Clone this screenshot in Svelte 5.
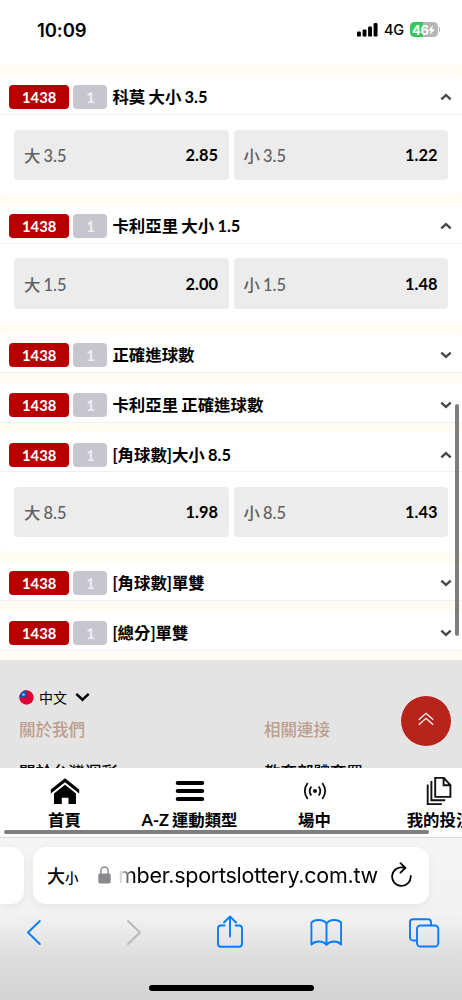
<script lang="ts">
	type Market = {
		title: string;
		odds?: { label: string; value: string }[];
	};

	let markets: Market[] = [
		{ title: "科莫 大小 3.5", odds: [{ label: "大 3.5", value: "2.85" }, { label: "小 3.5", value: "1.22" }] },
		{ title: "卡利亞里 大小 1.5", odds: [{ label: "大 1.5", value: "2.00" }, { label: "小 1.5", value: "1.48" }] },
		{ title: "正確進球數" },
		{ title: "卡利亞里 正確進球數" },
		{ title: "[角球數]大小 8.5", odds: [{ label: "大 8.5", value: "1.98" }, { label: "小 8.5", value: "1.43" }] },
		{ title: "[角球數]單雙" },
		{ title: "[總分]單雙" },
	];
</script>

<div class="phone">
	<header class="status">
		<span class="time">10:09</span>
		<div class="signals">
			<svg width="21" height="14" viewBox="0 0 21 14">
				<rect x="0" y="8.6" width="3.9" height="5" rx="1.2" />
				<rect x="5.6" y="6.6" width="3.9" height="7" rx="1.2" />
				<rect x="11.1" y="3.6" width="3.9" height="10" rx="1.2" />
				<rect x="16.6" y="0" width="3.9" height="13.6" rx="1.2" />
			</svg>
			<span class="network">4G</span>
			<div class="battery">
				<span>46</span>
				<svg width="7" height="10" viewBox="0 0 7 10"><path d="M5 0 0 5.7h2.8L1.8 10 7 4.2H4.1z" fill="#fff" /></svg>
			</div>
			<i class="tip"></i>
		</div>
	</header>

	<main>
		{#each markets as market}
			<section class="market">
				<div class="market-head">
					<span class="badge code">1438</span>
					<span class="badge count">1</span>
					<h3>{market.title}</h3>
					<svg class="chevron" class:open={market.odds} width="12" height="8" viewBox="0 0 12 8">
						<path d="M1.3 1.6 6 5.9l4.7-4.3" />
					</svg>
				</div>
				{#if market.odds}
					<div class="odds">
						{#each market.odds as odd}
							<button><span>{odd.label}</span><b>{odd.value}</b></button>
						{/each}
					</div>
				{/if}
			</section>
		{/each}
	</main>

	<footer>
		<div class="lang">
			<svg width="15" height="15" viewBox="0 0 15 15">
				<circle cx="7.5" cy="7.5" r="7.2" fill="#dc0030" />
				<path d="M7.5 7.5H.3A7.2 7.2 0 0 1 7.5.3z" fill="#1452a8" />
				<circle cx="4.5" cy="4.4" r="1.5" fill="#7fb0e4" />
			</svg>
			<span>中文</span>
			<svg width="15" height="10" viewBox="0 0 15 10"><path d="m1.3 1.8 6.2 5.9 6.2-5.9" fill="none" stroke="#000" stroke-width="2.5" /></svg>
		</div>
		<div class="columns">
			<div><h4>關於我們</h4><p>關於台灣運彩</p></div>
			<div><h4>相關連接</h4><p>教育部體育署</p></div>
		</div>
		<button class="top" aria-label="top">
			<svg width="16" height="14" viewBox="0 0 16 14"><path d="m.8 7.8 7.2-6.5 7.2 6.5M.8 12.8 8 6.3l7.2 6.500" fill="none" stroke="#fff" stroke-width="1.3" /></svg>
		</button>
	</footer>

	<nav class="menu">
		<div class="item">
			<svg width="30" height="28" viewBox="0 0 30 28">
				<path d="M.8 12.5 15 1.2l14.2 11.3v4L15 5.3.8 16.5z" />
				<path d="m4 16.5 11-8.8 11 8.8V27h-7.5v-6.2h-6.7V27H4z" />
			</svg>
			<span>首頁</span>
		</div>
		<div class="item">
			<svg width="30" height="28" viewBox="0 0 30 28"><path d="M2.700 6h24.600M2.700 14h24.600M2.700 22h24.600" stroke="#000" stroke-width="4" stroke-linecap="round" /></svg>
			<span>A-Z 運動類型</span>
		</div>
		<div class="item">
			<svg width="30" height="28" viewBox="0 0 30 28" fill="none" stroke="#111" stroke-width="1.8">
				<circle cx="15" cy="14" r="2.1" fill="#111" stroke="none" />
				<path d="M11.3 9.5q-3.2 4.5 0 9M18.7 9.5q3.2 4.5 0 9M7.7 6q-5.8 8 0 16M22.3 6q5.8 8 0 16" />
			</svg>
			<span>場中</span>
		</div>
		<div class="item">
			<svg width="30" height="28" viewBox="0 0 30 28" fill="none" stroke="#111" stroke-width="1.9">
				<path d="M10.2.9h8.6l6.6 7.2v11.8H10.2zM18.6 1v7.300h6.600M6.400 4v19.300h13.800M2.700 7.500v19.600h14.200" />
			</svg>
			<span>我的投注</span>
		</div>
		<i class="hscroll"></i>
	</nav>

	<div class="browser">
		<div class="tabs">
			<div class="prev-tab"></div>
			<div class="address">
				<span class="size">大<small>小</small></span>
				<svg width="13" height="18" viewBox="0 0 13 18">
					<rect x=".3" y="7.5" width="12.4" height="10" rx="1.7" fill="#8a898e" />
					<path d="M2.9 8V4.600a3.600 3.600 0 0 1 7.200 0V8" fill="none" stroke="#8a898e" stroke-width="1.5" />
				</svg>
				<span class="url">mber.sportslottery.com.tw</span>
				<svg width="22" height="26" viewBox="0 0 22 26" fill="none" stroke="#000" stroke-width="1.8" stroke-linecap="round" stroke-linejoin="round">
					<path d="M14 5.700A9.300 9.300 0 1 0 20.700 14M10.500 1.200l4.900 4.700-4.900 4.800" />
				</svg>
			</div>
			<div class="next-tab"></div>
		</div>
		<div class="tools">
			<svg width="32" height="36" viewBox="0 0 32 36"><path d="M22.8 7 11 18.500 22.800 30" /></svg>
			<svg class="off" width="32" height="36" viewBox="0 0 32 36"><path d="m13 7 12 11.500L13 30" /></svg>
			<svg width="32" height="36" viewBox="0 0 32 36"><path d="M11.500 11.500H8a3 3 0 0 0-3 3v15.200a3 3 0 0 0 3 3h18a3 3 0 0 0 3-3V14.500a3 3 0 0 0-3-3h-3.500M17 22.500V3M11 8.500l6-6 6 6" /></svg>
			<svg width="32" height="36" viewBox="0 0 32 36"><path d="M16.500 9.500C13 5 4.500 5 1.400 8.700v21.800c4-4 11.500-4 15.100.3 3.600-4.300 11.100-4.300 14.600-.3V8.700C28 5 20 5 16.500 9.500v21.300" /></svg>
			<svg width="32" height="36" viewBox="0 0 32 36"><rect x="9" y="11.500" width="21.300" height="21" rx="3.500" /><path d="M9 26.500H5a3 3 0 0 1-3-3V8.300a3 3 0 0 1 3-3h15a3 3 0 0 1 3 3v3" /></svg>
		</div>
		<div class="home"></div>
	</div>

	<i class="vscroll"></i>
</div>

<style>
	:global(body) {
		margin: 0;
	}

	.phone {
		position: relative;
		display: flex;
		flex-direction: column;
		width: 462px;
		height: 1000px;
		overflow: hidden;
		background: #fff;
		color: #000;
		font-family: Lato, "Noto Sans CJK TC", sans-serif;
	}
	.phone * {
		box-sizing: border-box;
	}
	svg {
		display: block;
		flex: none;
	}
	button {
		border: 0;
		font: inherit;
	}

	.status {
		display: flex;
		justify-content: space-between;
		height: 65.4px;
		padding: 17px 22px 0 37px;
		font-family: Inter, sans-serif;
	}
	.time {
		height: 24px;
		line-height: 26px;
		font-size: 18.5px;
		font-weight: 600;
		letter-spacing: -0.1px;
	}
	.signals {
		display: flex;
		align-items: center;
		height: 25px;
	}
	.network {
		width: 21px;
		margin: 0 5px 0 6px;
		font-size: 14.5px;
		font-weight: 500;
		letter-spacing: -0.3px;
	}
	.battery {
		display: flex;
		align-items: center;
		justify-content: center;
		width: 27.5px;
		height: 15.5px;
		border-radius: 4.5px;
		background: linear-gradient(90deg, #34c759 46%, #b5b5b5 46%);
		color: #fff;
		font-size: 13px;
		font-weight: 700;
		letter-spacing: -0.4px;
	}
	.tip {
		width: 1.5px;
		height: 5px;
		margin-left: 1px;
		border-radius: 0 2px 2px 0;
		background: #b5b5b5;
	}

	main {
		display: flex;
		flex-direction: column;
		gap: 10.7px;
		height: 595px;
		padding-top: 10.7px;
		background: #fffcf3;
	}
	.market {
		border-radius: 4px;
		background: #fff;
	}
	.market-head {
		display: flex;
		align-items: center;
		height: 39.06px;
		padding: 4.6px 10.5px 0 9.4px;
		border-bottom: 1px solid #f0f0f5;
	}
	.badge {
		height: 24px;
		border-radius: 4px;
		color: #fff;
		font-size: 14.8px;
		font-weight: 700;
		line-height: 24px;
		text-align: center;
	}
	.code {
		width: 59.6px;
		background: #b60000;
	}
	.count {
		width: 34px;
		margin: 0 5px 0 4.5px;
		background: #c7c6ce;
		color: #eeeef2;
	}
	h3 {
		flex: 1;
		margin: 0;
		font-size: 16.4px;
		font-weight: 700;
		line-height: 24px;
		white-space: nowrap;
		word-spacing: -0.7px;
	}
	.chevron {
		fill: none;
		stroke: #484848;
		stroke-width: 2.4;
	}
	.open {
		transform: rotate(180deg);
	}
	.odds {
		display: grid;
		grid-template-columns: 1fr 1fr;
		gap: 5px;
		height: 79.1px;
		padding: 14.4px 14px;
	}
	.odds button {
		display: flex;
		align-items: center;
		justify-content: space-between;
		padding: 0 10.5px 0 10px;
		border-radius: 4px;
		background: #ececec;
		color: #000;
		font-size: 16.4px;
	}
	.odds span {
		color: #606060;
		font-weight: 500;
		word-spacing: -1px;
	}

	footer {
		position: relative;
		height: 107.6px;
		padding: 28px 19px 0;
		overflow: hidden;
		background: #e4e4e4;
	}
	.lang {
		display: flex;
		align-items: center;
		height: 18px;
		font-size: 14px;
	}
	.lang span {
		margin: 0 8px 0 5px;
	}
	.columns {
		display: grid;
		grid-template-columns: 245px 1fr;
		padding-top: 11.5px;
	}
	h4,
	p {
		margin: 0;
		font-size: 16.5px;
		font-weight: 500;
		line-height: 24px;
	}
	h4 {
		color: #bc9e8d;
	}
	p {
		margin-top: 19.5px;
	}
	.top {
		position: absolute;
		top: 34.5px;
		right: 10px;
		display: flex;
		align-items: center;
		justify-content: center;
		width: 52px;
		height: 52px;
		padding: 0 0 4px;
		border: 1px solid #f7eeee;
		border-radius: 50%;
		background: #b6241b;
	}

	.menu {
		position: relative;
		display: flex;
		height: 69px;
		padding-left: 2px;
		overflow: hidden;
		background: #fff;
	}
	.item {
		display: flex;
		flex: 0 0 125px;
		flex-direction: column;
		align-items: center;
		padding-top: 9.5px;
	}
	.item span {
		margin-top: 3px;
		font-size: 16.4px;
		font-weight: 700;
		line-height: 24px;
		white-space: nowrap;
		word-spacing: -1px;
	}
	.hscroll,
	.vscroll {
		position: absolute;
		border-radius: 2px;
		background: #7e7e7e;
	}
	.hscroll {
		left: 4px;
		bottom: 3px;
		width: 425px;
		height: 4px;
	}
	.vscroll {
		top: 404px;
		left: 455px;
		width: 4px;
		height: 232px;
	}

	.browser {
		flex: 1;
		border-top: 1px solid #dcdcdc;
		background: linear-gradient(#f5f5f5 0, #f2f2f2 48%, #dedede 72%, #d3d3d3 100%);
	}
	.tabs {
		display: flex;
		justify-content: space-between;
		height: 66px;
		padding-top: 9px;
	}
	.tabs > div {
		height: 57px;
		background: #fff;
		box-shadow: 0 2px 10px rgba(0, 0, 0, 0.06);
	}
	.prev-tab {
		width: 24px;
		border-radius: 0 13px 13px 0;
	}
	.next-tab {
		width: 24px;
		visibility: hidden;
	}
	.address {
		display: flex;
		align-items: center;
		width: 396px;
		padding: 0 17px 0 14px;
		border-radius: 13px;
		font-family: Inter, "Noto Sans CJK TC", sans-serif;
	}
	.size {
		width: 51px;
		font-size: 18px;
		font-weight: 500;
		white-space: nowrap;
	}
	.size small {
		font-size: 13.5px;
	}
	.url {
		width: 260px;
		margin: 0 12px 0 7px;
		font-size: 21.5px;
		letter-spacing: -0.26px;
		white-space: nowrap;
		-webkit-mask-image: linear-gradient(90deg, transparent, #000 16px);
		mask-image: linear-gradient(90deg, transparent, #000 16px);
	}
	.tools {
		display: flex;
		justify-content: space-between;
		padding: 10px 22px 0 17px;
	}
	.tools svg {
		fill: none;
		stroke: #087cff;
		stroke-width: 1.9;
		stroke-linecap: round;
		stroke-linejoin: round;
	}
	.tools .off {
		stroke: #b8b8b8;
	}
	.home {
		width: 165px;
		height: 6px;
		margin: 35px auto 0;
		border-radius: 3px;
		background: #000;
	}
</style>
